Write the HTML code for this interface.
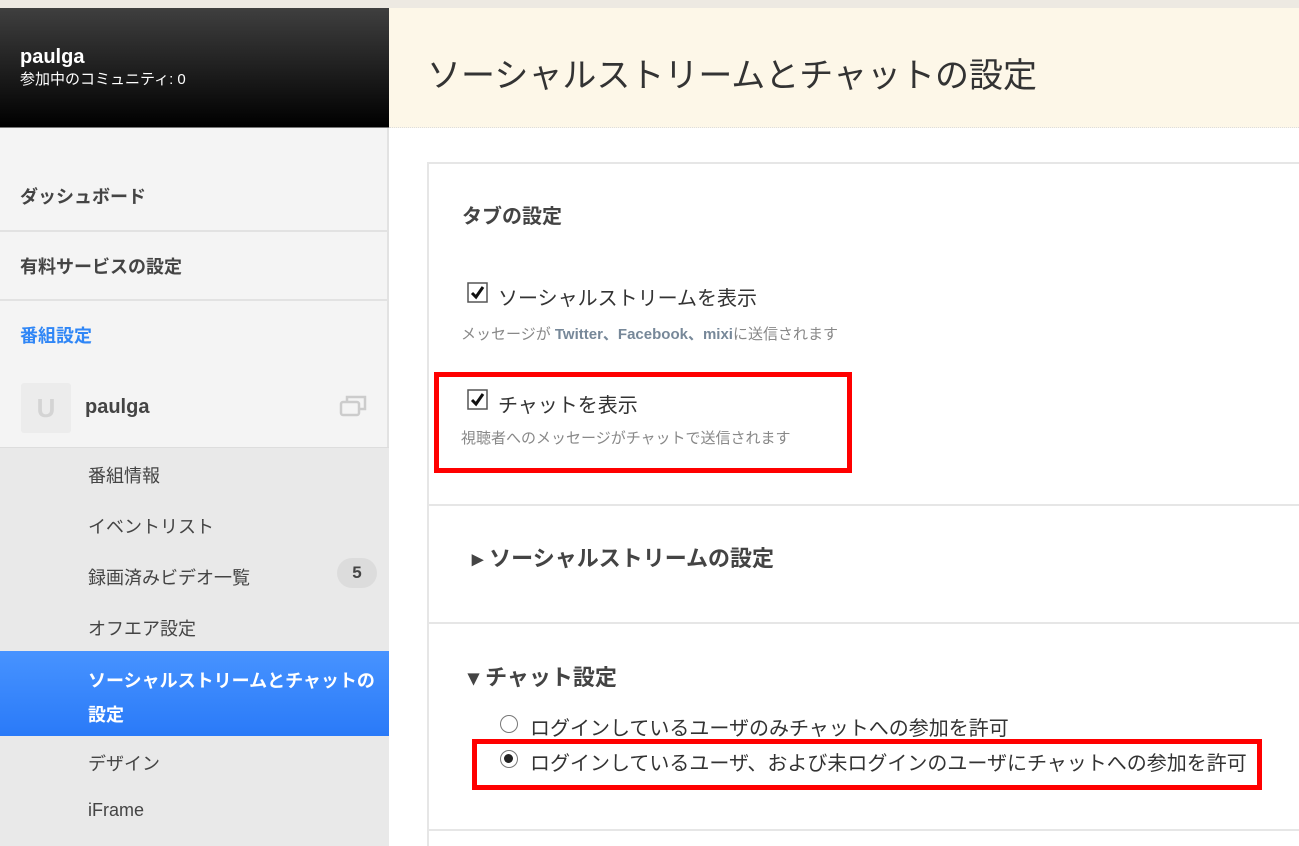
<!DOCTYPE html>
<html><head><meta charset="utf-8"><style>
*{margin:0;padding:0;box-sizing:border-box}
html,body{width:1299px;height:846px;overflow:hidden}
body{background:#fff;font-family:"Liberation Sans","Noto Sans CJK JP",sans-serif;color:#333;position:relative}
.abs{position:absolute}
.top{left:0;top:0;width:1299px;height:8px;background:#ede9e2}
.user{left:0;top:8px;width:389px;height:120px;background:linear-gradient(#3f3f3f,#000);border-bottom:1px solid #777;color:#fff}
.side{left:0;top:128px;width:389px;height:718px;background:#f4f4f4;border-right:2px solid #e2e2e2}
.sub{left:0;top:447px;width:389px;height:399px;background:#e9e9e9;border-top:1px solid #ddd}
.nav{left:20px;font-size:18px;font-weight:bold;color:#444}
.sep{left:0;width:389px;height:2px;background:#e2e2e2}
.si{left:88px;font-size:18px;color:#444}
.head{left:389px;top:8px;width:910px;height:120px;background:#fdf7e8;border-bottom:1px dotted #ddd}
.box{left:427px;top:162px;width:880px;height:684px;border:2px solid #e6e6e6;border-right:none;border-bottom:none}
.hr{left:427px;width:872px;height:2px;background:#e6e6e6}
.red{border:5px solid #f00}
</style></head><body>
<div class="abs top"></div>
<div class="abs user">
<div class="abs" style="left:20px;top:38px;font-size:20px;font-weight:bold">paulga</div>
<div class="abs" style="left:20px;top:60px;font-size:15px">参加中のコミュニティ: 0</div>
</div>
<div class="abs side"></div>
<div class="abs nav" style="top:183px">ダッシュボード</div>
<div class="abs sep" style="top:230px"></div>
<div class="abs nav" style="top:253px">有料サービスの設定</div>
<div class="abs sep" style="top:299px"></div>
<div class="abs nav" style="top:322px;color:#2f86f6">番組設定</div>
<div class="abs" style="left:21px;top:383px;width:50px;height:50px;background:#ececec;border-radius:3px;color:#d4d4d4;font-size:26px;font-weight:bold;text-align:center;line-height:50px">U</div>
<div class="abs" style="left:85px;top:396px;font-size:20px;font-weight:bold;color:#444">paulga</div>
<svg class="abs" style="left:339px;top:393px" width="30" height="26"><rect x="2" y="9" width="18" height="13" rx="2" fill="none" stroke="#ccc" stroke-width="2.5"/><path d="M8 9V4h18v12h-6" fill="none" stroke="#ccc" stroke-width="2.5"/></svg>
<div class="abs sub"></div>
<div class="abs si" style="top:462px">番組情報</div>
<div class="abs si" style="top:513px">イベントリスト</div>
<div class="abs si" style="top:564px">録画済みビデオ一覧</div>
<div class="abs" style="left:337px;top:558px;width:40px;height:30px;border-radius:15px;background:#dcdcdc;font-size:17px;font-weight:bold;text-align:center;line-height:30px;color:#444">5</div>
<div class="abs si" style="top:615px">オフエア設定</div>
<div class="abs" style="left:0;top:651px;width:389px;height:85px;background:linear-gradient(#4793ff,#2a7af8)"></div>
<div class="abs si" style="top:664px;color:#fff;font-weight:bold;line-height:34px;width:290px">ソーシャルストリームとチャットの設定</div>
<div class="abs si" style="top:750px">デザイン</div>
<div class="abs si" style="top:800px">iFrame</div>

<div class="abs head"><div class="abs" style="left:38px;top:40px;font-size:34px;color:#333">ソーシャルストリームとチャットの設定</div></div>
<div class="abs box"></div>
<div class="abs" style="left:462px;top:200px;font-size:20px;font-weight:bold;color:#444">タブの設定</div>
<svg class="abs" style="left:467px;top:282px" width="22" height="22"><rect x="1" y="1" width="19" height="19" fill="#fff" stroke="#555" stroke-width="1.5"/><path d="M5 11l4 4 7-10" fill="none" stroke="#111" stroke-width="3"/></svg>
<div class="abs" style="left:498px;top:282px;font-size:20px">ソーシャルストリームを表示</div>
<div class="abs" style="left:461px;top:323px;font-size:15px;color:#888">メッセージが <span style="color:#789;font-weight:bold">Twitter、Facebook、mixi</span>に送信されます</div>
<div class="abs red" style="left:434px;top:372px;width:418px;height:101px"></div>
<svg class="abs" style="left:467px;top:389px" width="22" height="22"><rect x="1" y="1" width="19" height="19" fill="#fff" stroke="#555" stroke-width="1.5"/><path d="M5 11l4 4 7-10" fill="none" stroke="#111" stroke-width="3"/></svg>
<div class="abs" style="left:498px;top:389px;font-size:20px">チャットを表示</div>
<div class="abs" style="left:461px;top:427px;font-size:15px;color:#888">視聴者へのメッセージがチャットで送信されます</div>
<div class="abs hr" style="top:504px"></div>
<div class="abs" style="left:472px;top:541px;font-size:22px;font-weight:bold;color:#444">▸ ソーシャルストリームの設定</div>
<div class="abs hr" style="top:622px"></div>
<div class="abs" style="left:468px;top:660px;font-size:22px;font-weight:bold;color:#444">▾ チャット設定</div>
<div class="abs" style="left:500px;top:715px;width:18px;height:18px;border:1.5px solid #777;border-radius:50%;background:#fff"></div>
<div class="abs" style="left:530px;top:712px;font-size:20px">ログインしているユーザのみチャットへの参加を許可</div>
<div class="abs red" style="left:472px;top:739px;width:790px;height:51px"></div>
<div class="abs" style="left:500px;top:750px;width:18px;height:18px;border:1.5px solid #777;border-radius:50%;background:#fff"><div style="margin:3px;width:9px;height:9px;border-radius:50%;background:#222"></div></div>
<div class="abs" style="left:530px;top:747px;font-size:20px">ログインしているユーザ、および未ログインのユーザにチャットへの参加を許可</div>
<div class="abs hr" style="top:829px"></div>
</body></html>
